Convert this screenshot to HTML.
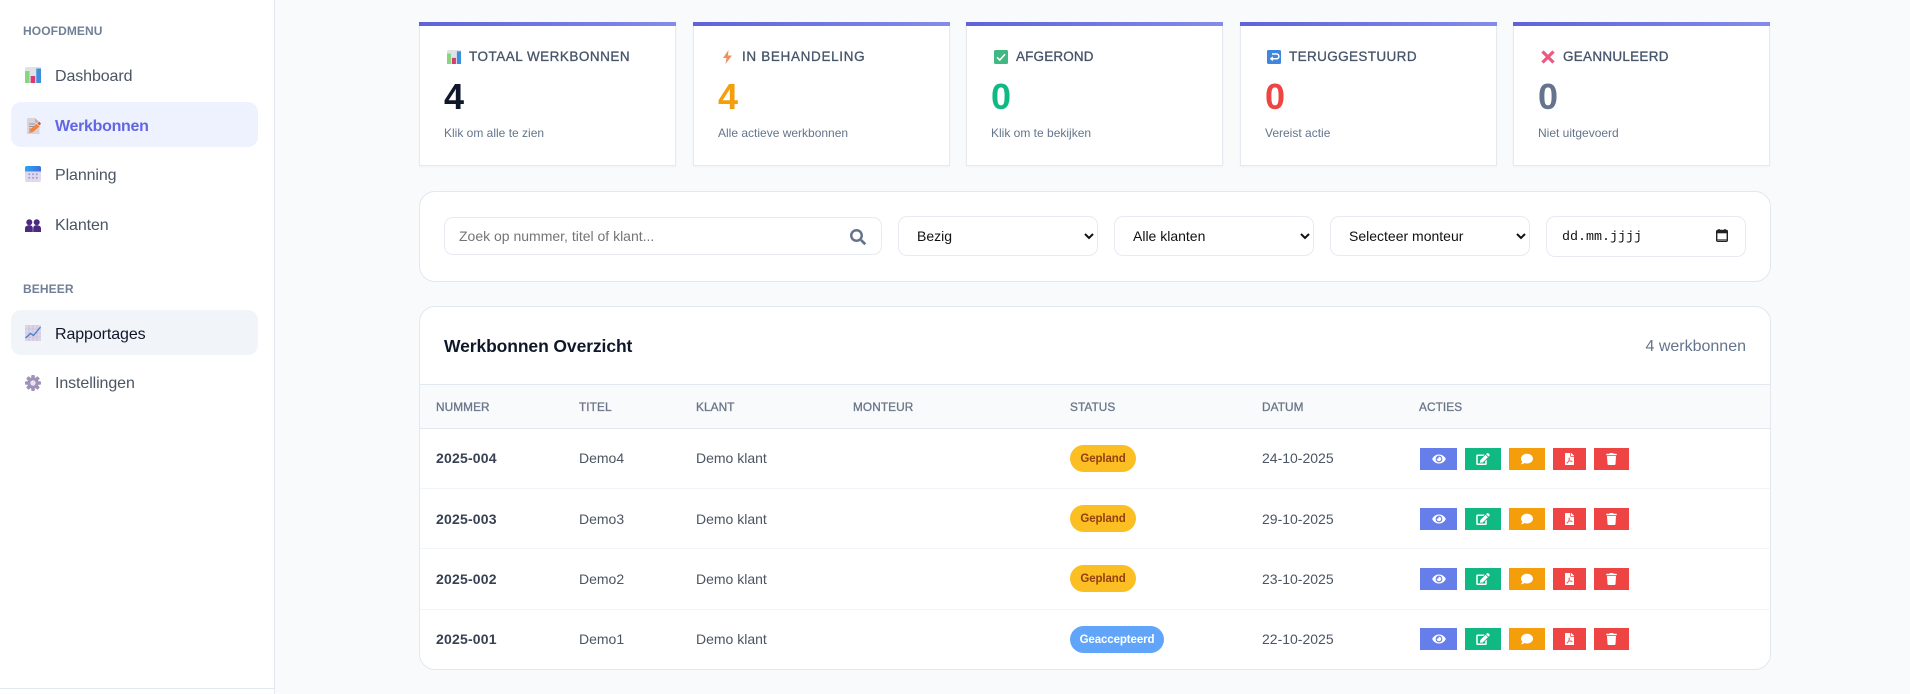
<!DOCTYPE html>
<html lang="nl">
<head>
<meta charset="utf-8">
<title>Werkbonnen</title>
<style>
*{box-sizing:border-box}
html,body{margin:0;padding:0;width:1910px;height:694px;overflow:hidden;background:#f8fafc;font-family:"Liberation Sans",Arial,sans-serif}
.a{position:absolute}
.t{position:absolute;white-space:nowrap;line-height:20px}
svg{display:block;position:absolute}
.side{left:0;top:0;width:275px;height:694px;background:#fff;border-right:1px solid #e2e8f0}
.lab{font-size:12px;font-weight:700;color:#718096;letter-spacing:.1px}
.nav{font-size:16px;color:#4b5563;letter-spacing:-.1px}
.card{background:#fff;border:1px solid #e5eaf1;top:22px;height:144px;width:257px;box-shadow:0 1px 2px rgba(15,23,42,.04)}
.bar{top:22px;height:4px;width:257px;background:linear-gradient(90deg,#5f63d8,#838bea)}
.ct{font-size:13.5px;color:#475569;-webkit-text-stroke:.3px #475569}
.num{font-size:36px;font-weight:700;line-height:40px}
.sub{font-size:12px;color:#64748b}
.box{background:#fff;border:1px solid #e2e8f0;border-radius:16px}
.sel{position:absolute;top:216px;width:200px;height:40px;background:#fff;border:1.5px solid #e7ebf1;border-radius:9px;font:14px "Liberation Sans",Arial,sans-serif;color:#111;padding:0 14px}
.th{font-size:11.8px;color:#6b7688;-webkit-text-stroke:.3px #6b7688;letter-spacing:.1px}
.td{font-size:14px;color:#4b5563}
.tn{font-size:14px;font-weight:700;color:#374151;letter-spacing:.2px}
.pill{position:absolute;height:27px;border-radius:14px;font-size:11.5px;font-weight:700;line-height:29px;text-align:center;letter-spacing:-.1px}
.g{left:1070px;width:66px;background:#fbbf24;color:#92400e}
.b{left:1070px;width:94px;background:#60a5fa;color:#fff}
.btn{position:absolute;height:22px}
.hr{position:absolute;left:420px;width:1350px;height:1px;background:#f1f5f9}
</style>
</head>
<body>

<div class="a side"></div>
<div class="a" style="left:0;top:688px;width:274px;height:1px;background:#e2e8f0"></div>
<div class="a" style="left:11px;top:102px;width:247px;height:45px;background:#eef2ff;border-radius:10px"></div>
<div class="a" style="left:11px;top:310px;width:247px;height:45px;background:#f1f5f9;border-radius:10px"></div>

<div class="t lab" style="left:23px;top:21px">HOOFDMENU</div>
<div class="t lab" style="left:23px;top:279px">BEHEER</div>

<div class="t nav" style="left:55px;top:67px">Dashboard</div>
<div class="t nav" style="left:55px;top:117px;color:#6366e1;font-weight:700;letter-spacing:-.3px">Werkbonnen</div>
<div class="t nav" style="left:55px;top:166px">Planning</div>
<div class="t nav" style="left:55px;top:216px">Klanten</div>
<div class="t nav" style="left:55px;top:325px;color:#0f172a">Rapportages</div>
<div class="t nav" style="left:55px;top:374px">Instellingen</div>

<!-- chart icon -->
<svg style="left:25px;top:67px" width="16" height="16" viewBox="0 0 16 16"><rect width="16" height="16" rx="1.5" fill="#dfe3e8"/><rect x="0" y="4" width="4.5" height="12" fill="#86d67e"/><rect x="5.7" y="9" width="4.5" height="7" fill="#d83a72"/><rect x="11.3" y="1.5" width="4.7" height="14.5" fill="#3f8fdf"/></svg>
<!-- memo icon -->
<svg style="left:27px;top:118px" width="14" height="16" viewBox="0 0 14 16"><path d="M0 0h8l4.5 4.5V16H0z" fill="#d9d3da"/><path d="M8 0l4.5 4.5H8z" fill="#b9b2bd"/><path d="M2 6h6M2 8.5h5M2 11h3" stroke="#9a93a2" stroke-width=".9"/><path d="M2 15l1-3.5 6.5-5.5 3 2.500-6.500 5.500z" fill="#f0843c"/><path d="M10.500 5.200l2-1.500 1.500 2-1.500 1.800z" fill="#e0503c"/></svg>
<!-- calendar icon -->
<svg style="left:25px;top:166px" width="16" height="16" viewBox="0 0 16 16"><defs><linearGradient id="cb" x1="0" x2="1"><stop offset="0" stop-color="#2ca7ee"/><stop offset="1" stop-color="#3f6fe0"/></linearGradient></defs><rect width="16" height="16" rx="2" fill="#e0d8ef"/><path d="M0 5.500V2a2 2 0 0 1 2-2h12a2 2 0 0 1 2 2v3.500z" fill="url(#cb)"/><g fill="#9d8fc2"><rect x="3.500" y="7.500" width="1.600" height="1.600"/><rect x="7.200" y="7.500" width="1.600" height="1.600"/><rect x="10.900" y="7.500" width="1.600" height="1.600"/><rect x="3.500" y="11" width="1.600" height="1.600"/><rect x="7.200" y="11" width="1.600" height="1.600"/><rect x="10.900" y="11" width="1.600" height="1.600"/></g></svg>
<!-- users icon -->
<svg style="left:25px;top:219px" width="16" height="13" viewBox="0 0 16 13" fill="#4c2a80"><circle cx="4.300" cy="3.200" r="3"/><circle cx="11.700" cy="3.200" r="3"/><path d="M0 13V9.500C0 7.500 1.800 6.300 4.300 6.300S7.800 7.500 7.800 9.500V13zM8.200 13V9.500c0-2 1-3.200 3.500-3.200S16 7.500 16 9.500V13z"/></svg>
<!-- trend icon -->
<svg style="left:25px;top:325px" width="16" height="16" viewBox="0 0 16 16"><rect width="16" height="16" fill="#dcd5e8"/><path d="M4 0v16M8 0v16M12 0v16M0 4h16M0 8h16M0 12h16" stroke="#c4bad6" stroke-width=".6"/><path d="M.5 13l5-4.500 3 2L15.500 2" fill="none" stroke="#3f7fd0" stroke-width="1.300"/></svg>
<!-- gear icon -->
<svg style="left:25px;top:375px" width="16" height="16" viewBox="0 0 16 16"><g fill="#9f92b8"><circle cx="8" cy="8" r="5.600"/><rect x="6.200" y="0" width="3.600" height="16" rx="1"/><rect x="0" y="6.200" width="16" height="3.600" rx="1"/><rect x="6.200" y="0" width="3.600" height="16" rx="1" transform="rotate(45 8 8)"/><rect x="6.200" y="0" width="3.600" height="16" rx="1" transform="rotate(-45 8 8)"/></g><circle cx="8" cy="8" r="2.700" fill="#e9e4f0"/></svg>

<!-- STAT CARDS -->
<div class="a card" style="left:419px"></div><div class="a bar" style="left:419px"></div>
<div class="a card" style="left:693px"></div><div class="a bar" style="left:693px"></div>
<div class="a card" style="left:966px"></div><div class="a bar" style="left:966px"></div>
<div class="a card" style="left:1240px"></div><div class="a bar" style="left:1240px"></div>
<div class="a card" style="left:1513px"></div><div class="a bar" style="left:1513px"></div>

<svg style="left:447px;top:50px" width="14" height="14" viewBox="0 0 16 16"><rect width="16" height="16" rx="1.500" fill="#dfe3e8"/><rect x="0" y="4" width="4.500" height="12" fill="#86d67e"/><rect x="5.700" y="9" width="4.500" height="7" fill="#d83a72"/><rect x="11.300" y="1.500" width="4.700" height="14.500" fill="#3f8fdf"/></svg>
<svg style="left:723px;top:50px" width="9" height="14" viewBox="0 0 9 14"><path d="M5.500 0L0 8h3.500L2.500 14 9 5.500H5z" fill="#f0905a"/></svg>
<svg style="left:994px;top:50px" width="14" height="14" viewBox="0 0 14 14"><rect width="14" height="14" rx="1.500" fill="#41b883"/><path d="M3 7.300l2.800 2.700L11 4.200" fill="none" stroke="#fff" stroke-width="1.500"/></svg>
<svg style="left:1267px;top:50px" width="14" height="14" viewBox="0 0 14 14"><rect width="14" height="14" rx="1.500" fill="#3f86e0"/><path d="M5 4h4.500a2.300 2.300 0 0 1 0 4.800H3.500" fill="none" stroke="#fff" stroke-width="1.500"/><path d="M5.800 6.300L2.800 8.800l3 2.500z" fill="#fff"/></svg>
<svg style="left:1541px;top:50px" width="14" height="14" viewBox="0 0 14 14"><path d="M1.500 1.500l11 11M12.500 1.500l-11 11" stroke="#ea5a80" stroke-width="3.200"/></svg>

<div class="t ct" style="left:469px;top:47px;letter-spacing:.49px">TOTAAL WERKBONNEN</div>
<div class="t ct" style="left:742px;top:47px;letter-spacing:.66px">IN BEHANDELING</div>
<div class="t ct" style="left:1016px;top:47px;letter-spacing:.15px">AFGEROND</div>
<div class="t ct" style="left:1289px;top:47px;letter-spacing:.38px">TERUGGESTUURD</div>
<div class="t ct" style="left:1563px;top:47px;letter-spacing:.27px">GEANNULEERD</div>

<div class="t num" style="left:444px;top:77px;color:#0f172a">4</div>
<div class="t num" style="left:718px;top:77px;color:#f59e0b">4</div>
<div class="t num" style="left:991px;top:77px;color:#10b981">0</div>
<div class="t num" style="left:1265px;top:77px;color:#ef4444">0</div>
<div class="t num" style="left:1538px;top:77px;color:#64748b">0</div>

<div class="t sub" style="left:444px;top:123px">Klik om alle te zien</div>
<div class="t sub" style="left:718px;top:123px">Alle actieve werkbonnen</div>
<div class="t sub" style="left:991px;top:123px">Klik om te bekijken</div>
<div class="t sub" style="left:1265px;top:123px">Vereist actie</div>
<div class="t sub" style="left:1538px;top:123px">Niet uitgevoerd</div>

<!-- FILTERS -->
<div class="a box" style="left:419px;top:191px;width:1352px;height:91px"></div>
<div class="a" style="left:444px;top:217px;width:438px;height:38px;border:1.5px solid #e7ebf1;border-radius:9px;background:#fff"></div>
<div class="t" style="left:459px;top:226px;font-size:14px;color:#757575">Zoek op nummer, titel of klant...</div>
<svg style="left:850px;top:229px" width="16" height="16" viewBox="0 0 512 512"><path fill="#64748b" d="M505 442.700L405.300 343c-4.500-4.500-10.600-7-17-7H372c27.600-35.300 44-79.700 44-128C416 93.100 322.900 0 208 0S0 93.100 0 208s93.100 208 208 208c48.300 0 92.700-16.400 128-44v16.300c0 6.400 2.500 12.500 7 17l99.700 99.700c9.400 9.400 24.600 9.400 33.900 0l28.300-28.300c9.400-9.400 9.400-24.600.1-34zM208 336c-70.700 0-128-57.200-128-128 0-70.700 57.200-128 128-128 70.700 0 128 57.200 128 128 0 70.700-57.200 128-128 128z"/></svg>

<select class="sel" style="left:898px"><option>Bezig</option></select>
<select class="sel" style="left:1114px"><option>Alle klanten</option></select>
<select class="sel" style="left:1330px"><option>Selecteer monteur</option></select>
<div class="a" style="left:1546px;top:216px;width:200px;height:41px;border:1.5px solid #e7ebf1;border-radius:9px;background:#fff"></div>
<div class="t" style="left:1562px;top:228px;font-family:'Liberation Mono',monospace;font-size:13.333px;color:#111">dd.mm.jjjj</div>
<svg style="left:1716px;top:229px" width="12" height="13" viewBox="0 0 12 13"><path d="M3 0v1.500M9 0v1.500" stroke="#222" stroke-width="1.400"/><rect x=".7" y="1.500" width="10.600" height="10.800" rx="1" fill="none" stroke="#222" stroke-width="1.400"/><rect x=".7" y="1.500" width="10.600" height="2.800" fill="#222"/><rect x="1.400" y="10" width="9.200" height="2" fill="#777"/></svg>

<!-- TABLE -->
<div class="a box" style="left:419px;top:306px;width:1352px;height:364px"></div>
<div class="t" style="left:444px;top:336px;font-size:17.5px;font-weight:700;color:#0f172a;letter-spacing:-.1px">Werkbonnen Overzicht</div>
<div class="t" style="right:164px;top:337px;font-size:16px;color:#64748b">4 werkbonnen</div>

<div class="a" style="left:420px;top:384px;width:1350px;height:45px;background:#f8fafc;border-top:1px solid #e2e8f0;border-bottom:1px solid #e2e8f0"></div>
<div class="t th" style="left:436px;top:397px">NUMMER</div>
<div class="t th" style="left:579px;top:397px">TITEL</div>
<div class="t th" style="left:696px;top:397px">KLANT</div>
<div class="t th" style="left:853px;top:397px">MONTEUR</div>
<div class="t th" style="left:1070px;top:397px">STATUS</div>
<div class="t th" style="left:1262px;top:397px">DATUM</div>
<div class="t th" style="left:1419px;top:397px">ACTIES</div>

<div class="hr" style="top:488px"></div>
<div class="hr" style="top:548px"></div>
<div class="hr" style="top:609px"></div>

<!-- rows -->
<div class="t tn" style="left:436px;top:448px">2025-004</div>
<div class="t td" style="left:579px;top:448px">Demo4</div>
<div class="t td" style="left:696px;top:448px">Demo klant</div>
<div class="pill g" style="top:445px">Gepland</div>
<div class="t td" style="left:1262px;top:448px">24-10-2025</div>

<div class="t tn" style="left:436px;top:509px">2025-003</div>
<div class="t td" style="left:579px;top:509px">Demo3</div>
<div class="t td" style="left:696px;top:509px">Demo klant</div>
<div class="pill g" style="top:505px">Gepland</div>
<div class="t td" style="left:1262px;top:509px">29-10-2025</div>

<div class="t tn" style="left:436px;top:569px">2025-002</div>
<div class="t td" style="left:579px;top:569px">Demo2</div>
<div class="t td" style="left:696px;top:569px">Demo klant</div>
<div class="pill g" style="top:565px">Gepland</div>
<div class="t td" style="left:1262px;top:569px">23-10-2025</div>

<div class="t tn" style="left:436px;top:629px">2025-001</div>
<div class="t td" style="left:579px;top:629px">Demo1</div>
<div class="t td" style="left:696px;top:629px">Demo klant</div>
<div class="pill b" style="top:626px">Geaccepteerd</div>
<div class="t td" style="left:1262px;top:629px">22-10-2025</div>

<!-- action button symbols -->
<svg width="0" height="0" style="position:absolute">
<symbol id="eye" viewBox="0 0 576 512"><path fill="#fff" d="M572.520 241.400C518.290 135.590 410.930 64 288 64S57.680 135.640 3.480 241.410a32.350 32.350 0 0 0 0 29.190C57.710 376.410 165.070 448 288 448s230.320-71.640 284.520-177.410a32.350 32.350 0 0 0 0-29.190zM288 400a144 144 0 1 1 144-144 143.930 143.930 0 0 1-144 144zm0-240a95.310 95.310 0 0 0-25.310 3.790 47.850 47.850 0 0 1-66.900 66.900A95.780 95.780 0 1 0 288 160z"/></symbol>
<symbol id="edit" viewBox="0 0 576 512"><path fill="#fff" d="M402.600 83.200l90.200 90.200c3.800 3.800 3.800 10 0 13.800L274.400 405.600l-92.800 10.300c-12.400 1.400-22.900-9.100-21.500-21.500l10.300-92.800L388.800 83.200c3.800-3.800 10-3.800 13.800 0zm162-22.900l-48.800-48.800c-15.200-15.200-39.900-15.200-55.200 0l-35.400 35.400c-3.800 3.800-3.800 10 0 13.800l90.200 90.200c3.800 3.800 10 3.800 13.800 0l35.400-35.400c15.200-15.300 15.200-40 0-55.200zM384 346.200V448H64V128h229.800c3.200 0 6.200-1.300 8.500-3.500l40-40c7.600-7.600 2.200-20.500-8.500-20.500H48C21.500 64 0 85.500 0 112v352c0 26.500 21.500 48 48 48h352c26.500 0 48-21.500 48-48V306.200c0-10.700-12.900-16-20.500-8.500l-40 40c-2.200 2.300-3.500 5.300-3.500 8.500z"/></symbol>
<symbol id="com" viewBox="0 0 512 512"><path fill="#fff" d="M256 32C114.600 32 0 125.100 0 240c0 49.600 21.400 95 57 130.700C44.500 421.100 2.700 466 2.200 466.500c-2.200 2.300-2.800 5.700-1.500 8.700S4.800 480 8 480c66.300 0 116-31.800 140.600-51.400 32.700 12.300 69 19.400 107.400 19.400 141.400 0 256-93.100 256-208S397.400 32 256 32z"/></symbol>
<symbol id="pdf" viewBox="0 0 384 512"><path fill="#fff" d="M181.900 256.100c-5-16-4.900-46.900-2-46.900 8.400 0 7.600 36.900 2 46.900zm-1.700 47.200c-7.700 20.200-17.300 43.300-28.400 62.700 18.300-7 39-17.200 62.900-21.900-12.700-9.600-24.900-23.400-34.500-40.800zM86.100 428.100c0 .8 13.200-5.400 34.900-40.200-6.700 6.300-29.100 24.500-34.900 40.200zM248 160h136v328c0 13.300-10.700 24-24 24H24c-13.300 0-24-10.700-24-24V24C0 10.700 10.700 0 24 0h200v136c0 13.200 10.800 24 24 24zm-8 171.800c-20-12.200-33.300-29-42.700-53.800 4.500-18.500 11.600-46.600 6.200-64.200-4.700-29.400-42.400-26.500-47.800-6.800-5 18.300-.4 44.100 8.100 77-11.600 27.600-28.700 64.600-40.800 85.800-.1 0-.1.1-.2.1-27.100 13.900-73.600 44.500-54.500 68 5.600 6.900 16 10 21.500 10 17.900 0 35.700-18 61.100-61.800 25.800-8.500 54.100-19.100 79-23.200 21.700 11.800 47.100 19.500 64 19.500 29.200 0 31.200-32 19.700-43.400-13.900-13.600-54.300-9.700-73.600-7.200zM377 105L279 7c-4.500-4.500-10.600-7-17-7h-6v128h128v-6.100c0-6.300-2.500-12.400-7-16.900zm-74.100 255.300c4.100-2.700-2.500-11.900-42.800-9 37.100 15.800 42.800 9 42.800 9z"/></symbol>
<symbol id="tr" viewBox="0 0 448 512"><path fill="#fff" d="M432 32H312l-9.400-18.700A24 24 0 0 0 281.100 0H166.800a23.720 23.720 0 0 0-21.400 13.300L136 32H16A16 16 0 0 0 0 48v32a16 16 0 0 0 16 16h416a16 16 0 0 0 16-16V48a16 16 0 0 0-16-16zM53.200 467a48 48 0 0 0 47.900 45h245.800a48 48 0 0 0 47.900-45L416 128H32z"/></symbol>
</svg>

<!-- row 1 buttons -->
<div class="btn" style="left:1420px;top:448px;width:37px;background:#667eea"><svg style="left:11.5px;top:4.5px" width="14" height="12"><use href="#eye"/></svg></div>
<div class="btn" style="left:1465px;top:448px;width:36px;background:#10b981"><svg style="left:11px;top:4.5px" width="14" height="12"><use href="#edit"/></svg></div>
<div class="btn" style="left:1509px;top:448px;width:36px;background:#f59e0b"><svg style="left:12px;top:4.5px" width="12" height="12"><use href="#com"/></svg></div>
<div class="btn" style="left:1553px;top:448px;width:33px;background:#ef4444"><svg style="left:12px;top:4.5px" width="9" height="12"><use href="#pdf"/></svg></div>
<div class="btn" style="left:1594px;top:448px;width:35px;background:#ef4444"><svg style="left:12px;top:4.5px" width="11" height="12"><use href="#tr"/></svg></div>
<!-- row 2 buttons -->
<div class="btn" style="left:1420px;top:508px;width:37px;background:#667eea"><svg style="left:11.5px;top:4.5px" width="14" height="12"><use href="#eye"/></svg></div>
<div class="btn" style="left:1465px;top:508px;width:36px;background:#10b981"><svg style="left:11px;top:4.5px" width="14" height="12"><use href="#edit"/></svg></div>
<div class="btn" style="left:1509px;top:508px;width:36px;background:#f59e0b"><svg style="left:12px;top:4.5px" width="12" height="12"><use href="#com"/></svg></div>
<div class="btn" style="left:1553px;top:508px;width:33px;background:#ef4444"><svg style="left:12px;top:4.5px" width="9" height="12"><use href="#pdf"/></svg></div>
<div class="btn" style="left:1594px;top:508px;width:35px;background:#ef4444"><svg style="left:12px;top:4.5px" width="11" height="12"><use href="#tr"/></svg></div>
<!-- row 3 buttons -->
<div class="btn" style="left:1420px;top:568px;width:37px;background:#667eea"><svg style="left:11.5px;top:4.5px" width="14" height="12"><use href="#eye"/></svg></div>
<div class="btn" style="left:1465px;top:568px;width:36px;background:#10b981"><svg style="left:11px;top:4.5px" width="14" height="12"><use href="#edit"/></svg></div>
<div class="btn" style="left:1509px;top:568px;width:36px;background:#f59e0b"><svg style="left:12px;top:4.5px" width="12" height="12"><use href="#com"/></svg></div>
<div class="btn" style="left:1553px;top:568px;width:33px;background:#ef4444"><svg style="left:12px;top:4.5px" width="9" height="12"><use href="#pdf"/></svg></div>
<div class="btn" style="left:1594px;top:568px;width:35px;background:#ef4444"><svg style="left:12px;top:4.5px" width="11" height="12"><use href="#tr"/></svg></div>
<!-- row 4 buttons -->
<div class="btn" style="left:1420px;top:628px;width:37px;background:#667eea"><svg style="left:11.5px;top:4.5px" width="14" height="12"><use href="#eye"/></svg></div>
<div class="btn" style="left:1465px;top:628px;width:36px;background:#10b981"><svg style="left:11px;top:4.5px" width="14" height="12"><use href="#edit"/></svg></div>
<div class="btn" style="left:1509px;top:628px;width:36px;background:#f59e0b"><svg style="left:12px;top:4.5px" width="12" height="12"><use href="#com"/></svg></div>
<div class="btn" style="left:1553px;top:628px;width:33px;background:#ef4444"><svg style="left:12px;top:4.5px" width="9" height="12"><use href="#pdf"/></svg></div>
<div class="btn" style="left:1594px;top:628px;width:35px;background:#ef4444"><svg style="left:12px;top:4.5px" width="11" height="12"><use href="#tr"/></svg></div>

</body>
</html>
